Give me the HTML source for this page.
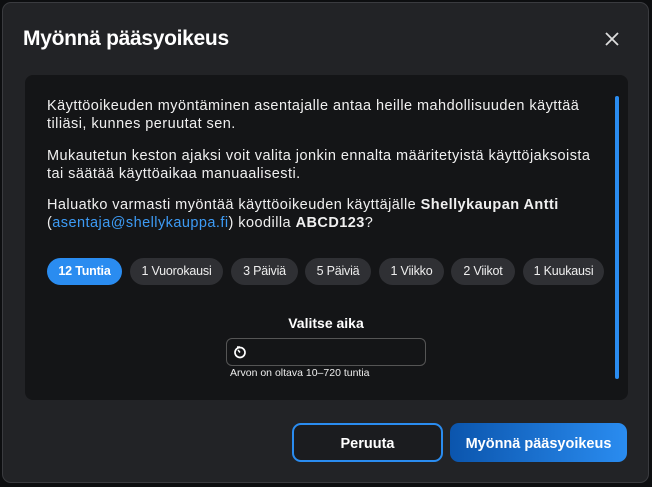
<!DOCTYPE html>
<html><head><meta charset="utf-8"><style>
body{margin:0;width:652px;height:487px;background:#0d0e10;font-family:"Liberation Sans",sans-serif;overflow:hidden;position:relative}
.dlg{position:absolute;left:2px;top:2px;width:647px;height:481px;background:#222326;border-radius:9px;border:1px solid #3a3b3f;box-sizing:border-box}
.title{position:absolute;left:23px;top:27px;color:#fff;font-size:21px;font-weight:bold;letter-spacing:-0.3px}
.x{position:absolute;left:602px;top:29px}
.panel{position:absolute;left:25px;top:75px;width:603px;height:325px;background:#141517;border-radius:8px}
.sb{position:absolute;left:615px;top:96px;width:4px;height:283px;background:#2a8cf0;border-radius:2px}
p{position:absolute;left:47px;margin:0;color:#f0f0f0;font-size:14.5px;letter-spacing:0.45px;line-height:18px;width:570px;white-space:nowrap}
a{color:#3d9bf5;text-decoration:none}
.chip{position:absolute;top:258px;height:27px;line-height:27px;border-radius:14px;background:#2f3034;color:#eee;font-size:12.5px;text-align:center;letter-spacing:-0.2px}
.on{background:#2a8cf0;color:#fff;font-weight:bold}
.lbl{position:absolute;left:0;width:652px;top:315px;text-align:center;color:#fff;font-weight:bold;font-size:14px}
.inp{position:absolute;left:226px;top:338px;width:200px;height:28px;border:1px solid #555;border-radius:6px;box-sizing:border-box;background:#141517}
.hint{position:absolute;left:230px;top:367px;color:#eee;font-size:10.5px}
.btn{position:absolute;top:423px;height:39px;border-radius:9px;box-sizing:border-box;color:#fff;font-weight:bold;font-size:14.5px;display:flex;align-items:center;justify-content:center;padding-top:2px}
</style></head><body>
<div class="dlg"></div>
<div class="title">Myönnä pääsyoikeus</div>
<svg class="x" width="20" height="20" viewBox="0 0 20 20"><path d="M4 4L16 16M16 4L4 16" stroke="#ddd" stroke-width="1.8"/></svg>
<div class="panel"></div>
<div class="sb"></div>
<p style="top:97px">Käyttöoikeuden myöntäminen asentajalle antaa heille mahdollisuuden käyttää<br>tiliäsi, kunnes peruutat sen.</p>
<p style="top:147px">Mukautetun keston ajaksi voit valita jonkin ennalta määritetyistä käyttöjaksoista<br>tai säätää käyttöaikaa manuaalisesti.</p>
<p style="top:196px">Haluatko varmasti myöntää käyttöoikeuden käyttäjälle <b>Shellykaupan Antti</b><br>(<a>asentaja@shellykauppa.fi</a>) koodilla <b>ABCD123</b>?</p>
<div class="chip on" style="left:47px;width:75px">12 Tuntia</div>
<div class="chip" style="left:130px;width:93px">1 Vuorokausi</div>
<div class="chip" style="left:231px;width:67px">3 Päiviä</div>
<div class="chip" style="left:305px;width:66px">5 Päiviä</div>
<div class="chip" style="left:379px;width:65px">1 Viikko</div>
<div class="chip" style="left:451px;width:64px">2 Viikot</div>
<div class="chip" style="left:523px;width:81px">1 Kuukausi</div>
<div class="lbl">Valitse aika</div>
<div class="inp"><svg style="position:absolute;left:6px;top:6px" width="14" height="14" viewBox="0 0 14 14"><circle cx="7" cy="7.5" r="5" fill="none" stroke="#fff" stroke-width="1.7"/><path d="M7 7.5L5 5M4 2h3" stroke="#fff" stroke-width="1.5"/></svg></div>
<div class="hint">Arvon on oltava 10–720 tuntia</div>
<div class="btn" style="left:292px;width:151px;border:2px solid #2a8cf0;background:#1b1c1f">Peruuta</div>
<div class="btn" style="left:450px;width:177px;background:linear-gradient(90deg,#0b55ad,#2a8cf0)">Myönnä pääsyoikeus</div>
</body></html>
